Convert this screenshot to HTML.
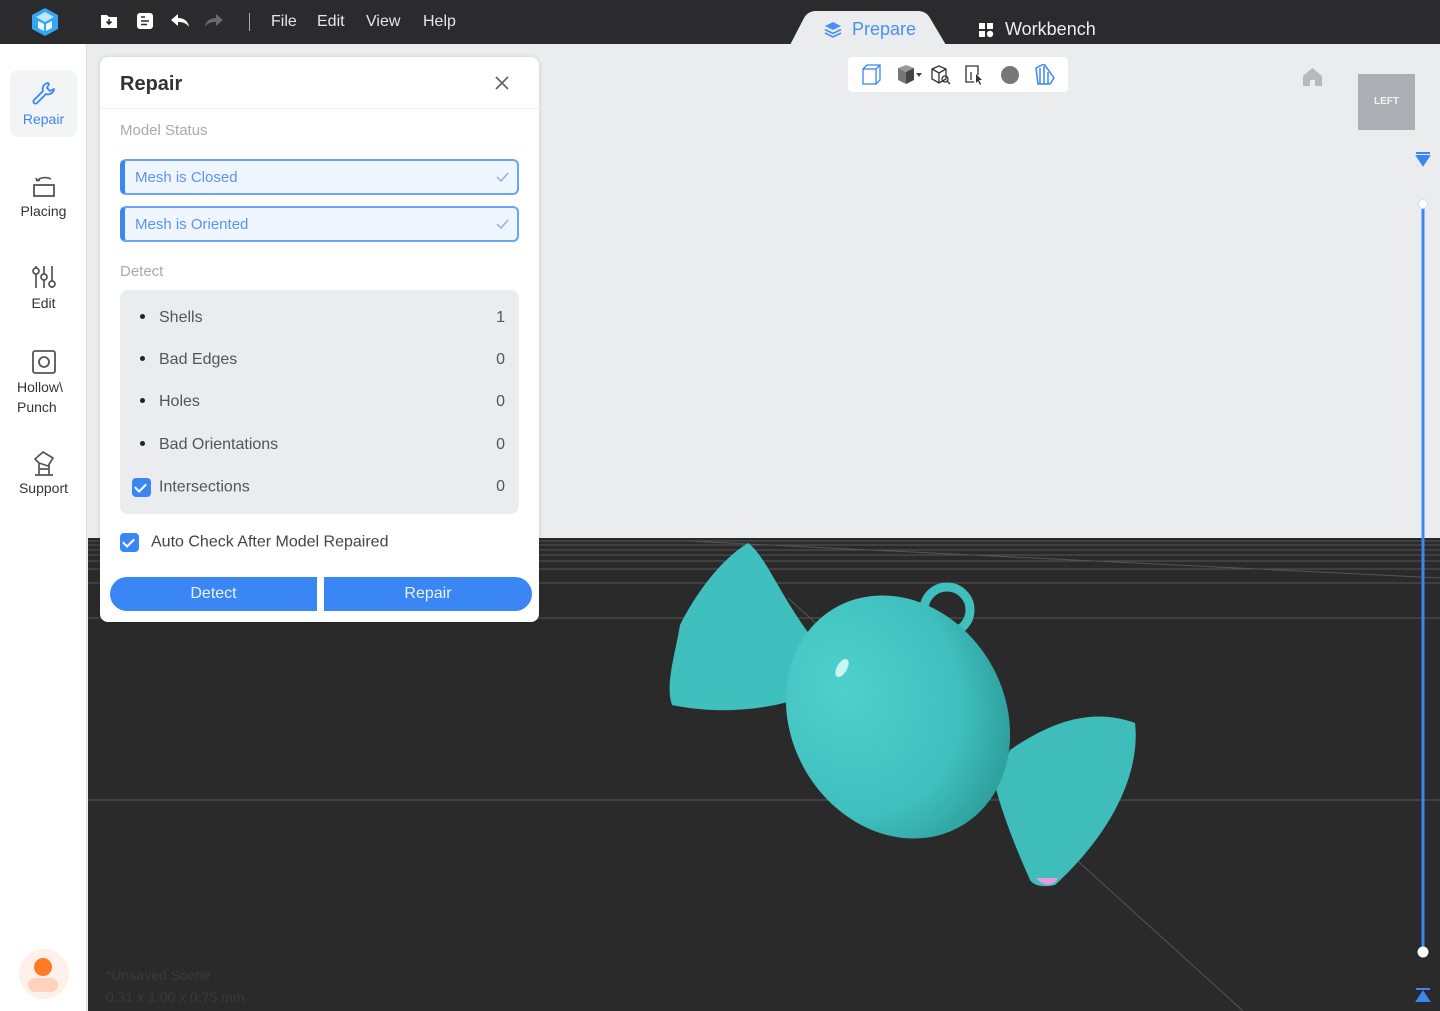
<!DOCTYPE html>
<html><head><meta charset="utf-8"><style>
*{box-sizing:border-box;margin:0;padding:0}
body{width:1440px;height:1011px;overflow:hidden;font-family:"Liberation Sans","Noto Sans CJK SC",sans-serif;background:#ebecee;position:relative}
.abs{position:absolute}
.top{left:0;top:0;width:1440px;height:44px;background:#2b2b2d}
.menu{color:#e6e6e6;font-size:16px;top:13px}
.side{left:0;top:44px;width:87px;height:967px;background:#fff;border-right:1px solid #d8d8d8}
.si{position:absolute;width:87px;text-align:center;font-size:14px;color:#333}
.panel{left:100px;top:57px;width:439px;height:565px;background:#fff;border-radius:8px;box-shadow:0 0 4px rgba(0,0,0,.15)}
.status{position:absolute;left:20px;width:399px;height:36px;background:#f0f6ff;border:2px solid #6aa4f8;border-left:5px solid #3a86f5;border-radius:6px;color:#5a93ee;font-size:15px;padding:8px 0 0 10px}
.status svg{position:absolute;right:8px;top:11px}
.row{position:absolute;left:20px;right:34px;font-size:16px;color:#555}
.row b{font-weight:normal;position:absolute;right:0}
.dot{display:inline-block;width:5px;height:5px;background:#222;border-radius:50%;margin:0 14px 3px 0;vertical-align:middle}
.cb{display:inline-block;width:19px;height:19px;background:#3a86f5;border-radius:4px;vertical-align:middle;position:relative}
.cb:after{content:"";position:absolute;left:5px;top:3px;width:5px;height:9px;border:solid #fff;border-width:0 2px 2px 0;transform:rotate(45deg)}
.btn{position:absolute;top:520px;height:34px;background:#3a86f5;color:#eaf2ff;font-size:16px;text-align:center;line-height:34px}
</style></head><body>
<div class="abs top"></div>
<svg class="abs" style="left:30px;top:7px" width="30" height="30" viewBox="0 0 30 30"><polygon points="15,1 28,8 28,22 15,29 2,22 2,8" fill="#35a6f0"/><polygon points="15,5 24,10 15,15 6,10" fill="#bfe6ff"/><path d="M8 14v7l6 3v-7zM22 14v7l-6 3v-7z" fill="#fff" opacity=".9"/></svg>
<svg class="abs" style="left:100px;top:12px" width="18" height="18" viewBox="0 0 18 18"><path d="M1 3h6l2 2h8v11H1z" fill="#fff"/><path d="M9 7v5M6.5 9.5L9 12l2.5-2.5" stroke="#2b2b2d" stroke-width="1.6" fill="none"/></svg>
<svg class="abs" style="left:136px;top:12px" width="18" height="18" viewBox="0 0 18 18"><rect x="1" y="1" width="16" height="16" rx="3" fill="#fff"/><path d="M5 9h8M5 12.5h6M5 5h4" stroke="#2b2b2d" stroke-width="1.6"/></svg>
<svg class="abs" style="left:170px;top:12px" width="20" height="18" viewBox="0 0 20 18"><path d="M8 2L1 8l7 6V10c5 0 8 1 11 5-1-6-5-9-11-9z" fill="#fff"/></svg>
<svg class="abs" style="left:204px;top:12px" width="20" height="18" viewBox="0 0 20 18"><path d="M12 2l7 6-7 6V10c-5 0-8 1-11 5 1-6 5-9 11-9z" fill="#6a6a6a"/></svg>
<div class="abs" style="left:249px;top:13px;width:1px;height:18px;background:#aaa"></div>
<div class="abs menu" style="left:271px">File</div>
<div class="abs menu" style="left:317px">Edit</div>
<div class="abs menu" style="left:366px">View</div>
<div class="abs menu" style="left:423px">Help</div>
<svg class="abs" style="left:790px;top:10px" width="158" height="35"><path d="M0 35 L14 8 Q18 1 26 1 L128 1 Q136 1 140 8 L156 35Z" fill="#ebecee"/></svg>
<svg class="abs" style="left:824px;top:21px" width="18" height="17" viewBox="0 0 18 17"><path d="M9 1l8 4-8 4-8-4z" fill="#4a8ff5"/><path d="M1 8.5l8 4 8-4M1 12l8 4 8-4" stroke="#4a8ff5" stroke-width="1.6" fill="none"/></svg>
<div class="abs" style="left:852px;top:19px;font-size:18px;color:#4a8ff5">Prepare</div>
<svg class="abs" style="left:978px;top:22px" width="16" height="16"><rect x="1" y="1" width="6" height="6" fill="#fff"/><rect x="9" y="1" width="6" height="6" fill="#fff"/><rect x="1" y="9" width="6" height="6" fill="#fff"/><circle cx="12" cy="12" r="3.2" fill="#fff"/></svg>
<div class="abs" style="left:1005px;top:19px;font-size:18px;color:#eee">Workbench</div>
<div class="abs side"></div>
<div class="abs" style="left:10px;top:70px;width:67px;height:67px;background:#f3f4f6;border-radius:8px"></div>
<svg class="abs" style="left:31px;top:80px" width="26" height="26" viewBox="0 0 26 26"><path d="M17 3a6 6 0 0 0-5 8L3 20a2 2 0 0 0 3 3l9-9a6 6 0 0 0 8-5l-4 2-3-3 2-4z" fill="none" stroke="#3a86f5" stroke-width="1.8" stroke-linejoin="round"/></svg>
<div class="si" style="top:111px;color:#3a86f5">Repair</div>
<svg class="abs" style="left:31px;top:173px" width="26" height="26" viewBox="0 0 26 26"><rect x="3" y="12" width="20" height="11" fill="none" stroke="#555" stroke-width="1.8"/><path d="M6 8a9 6 0 0 1 14-2M6 8l-1-3M6 8l3-1" fill="none" stroke="#555" stroke-width="1.6"/></svg>
<div class="si" style="top:203px">Placing</div>
<svg class="abs" style="left:31px;top:264px" width="26" height="26" viewBox="0 0 26 26"><path d="M5 2v22M13 2v22M21 2v22" stroke="#555" stroke-width="1.7"/><circle cx="5" cy="7" r="3" fill="#fff" stroke="#555" stroke-width="1.7"/><circle cx="13" cy="13" r="3" fill="#fff" stroke="#555" stroke-width="1.7"/><circle cx="21" cy="20" r="3" fill="#fff" stroke="#555" stroke-width="1.7"/></svg>
<div class="si" style="top:295px">Edit</div>
<svg class="abs" style="left:31px;top:349px" width="26" height="26" viewBox="0 0 26 26"><rect x="2" y="2" width="22" height="22" rx="2" fill="none" stroke="#555" stroke-width="1.8"/><circle cx="13" cy="13" r="5" fill="none" stroke="#555" stroke-width="1.8"/></svg>
<div class="si" style="top:377px;text-align:left;left:17px;line-height:20px">Hollow\<br>Punch</div>
<svg class="abs" style="left:31px;top:449px" width="26" height="28" viewBox="0 0 26 28"><path d="M4 10l8-7 10 6-5 8-9-3z M8 14v12M18 16v10M4 26h18M8 20l10 0" fill="none" stroke="#555" stroke-width="1.7" stroke-linejoin="round"/></svg>
<div class="si" style="top:480px">Support</div>
<div class="abs" style="left:19px;top:949px;width:50px;height:50px;border-radius:50%;background:#fff1ea"></div>
<div class="abs" style="left:34px;top:958px;width:18px;height:18px;border-radius:50%;background:#ff7b25"></div>
<div class="abs" style="left:28px;top:978px;width:30px;height:14px;border-radius:15px;background:#ffd3bb"></div>
<div class="abs" style="left:88px;top:538px;width:1352px;height:473px;background:#2a2a2a"></div>
<svg class="abs" style="left:88px;top:538px" width="1352" height="473">
<g stroke="#555" stroke-width="1">
<line x1="0" y1="3" x2="1352" y2="3"/><line x1="0" y1="7" x2="1352" y2="7"/><line x1="0" y1="12" x2="1352" y2="12"/><line x1="0" y1="17" x2="1352" y2="17"/><line x1="0" y1="23" x2="1352" y2="23"/><line x1="0" y1="31" x2="1352" y2="31"/><line x1="0" y1="45" x2="1352" y2="45"/><line x1="0" y1="80" x2="1352" y2="80"/><line x1="0" y1="262" x2="1352" y2="262"/>
<line x1="600" y1="3" x2="1352" y2="40"/>
<line x1="700" y1="60" x2="1155" y2="473"/>
</g></svg>
<svg class="abs" style="left:660px;top:535px" width="490" height="360" viewBox="0 0 490 360">
<defs><radialGradient id="g" cx="0.35" cy="0.3" r="0.8"><stop offset="0" stop-color="#4fd0cd"/><stop offset="0.65" stop-color="#3fbfbd"/><stop offset="1" stop-color="#2a9896"/></radialGradient></defs>
<path d="M88 8 C105 20 120 60 150 100 L170 120 L150 160 C110 175 60 180 12 170 C5 150 15 120 20 90 C35 60 60 25 88 8Z" fill="#3fc0be"/>
<path d="M350 215 C400 180 440 175 475 188 C480 230 460 290 395 350 C385 352 375 352 370 345 C350 300 340 270 335 250Z" fill="#3fbdbb"/>
<path d="M376 343 C384 352 393 352 398 343Z" fill="#e59be0"/>
<circle cx="287" cy="75" r="23" fill="none" stroke="#3fc0be" stroke-width="9"/>
<ellipse cx="238" cy="182" rx="107" ry="126" transform="rotate(-30 238 182)" fill="url(#g)"/>
<ellipse cx="182" cy="133" rx="5" ry="10" transform="rotate(30 182 133)" fill="#e8ffff" opacity=".8"/>
</svg>
<div class="abs" style="left:848px;top:57px;width:220px;height:35px;background:#fff;border-radius:4px"></div>
<svg class="abs" style="left:860px;top:64px" width="200" height="22">
<g fill="none" stroke="#3a86f5" stroke-width="1.3"><rect x="3" y="5" width="13" height="15"/><path d="M3 5l4-4h13v15l-4 4M16 5l4-4"/></g>
<polygon points="38,4 46,1 54,4 46,8" fill="#999"/><polygon points="38,4 46,8 46,20 38,16" fill="#777"/><polygon points="46,8 54,4 54,16 46,20" fill="#444"/><polygon points="56,9 62,9 59,13" fill="#444"/>
<g fill="none" stroke="#333" stroke-width="1.3"><path d="M72 5l7-3 7 3v10l-7 4-7-4zM72 5l7 4 7-4M79 9v10"/><circle cx="85" cy="15" r="3"/><path d="M87 17l3 3"/><path d="M114 18h-8V2h12v9M111 8v8"/></g>
<path d="M116 10l6 6-3 0 2 4-1 1-2-4-2 2z" fill="#333"/>
<circle cx="150" cy="11" r="9" fill="#777"/>
<g fill="none" stroke="#3a86f5" stroke-width="1.5"><path d="M178 20l-2-16 8-4 10 14-4 6z"/><path d="M180 4v16M184 2v18M188 8v12"/></g>
</svg>
<svg class="abs" style="left:1302px;top:67px" width="21" height="20"><path d="M10.5 1L1 9v10h7v-6h5v6h7V9z" fill="#b8b9bd"/></svg>
<div class="abs" style="left:1358px;top:74px;width:57px;height:56px;background:#aeafb4;color:#f2f2f2;font-size:10px;font-weight:bold;text-align:center;line-height:56px">LEFT</div>
<svg class="abs" style="left:1413px;top:150px" width="22" height="860">
<path d="M3 3h14M4 6l6 9 6-9z" fill="#3a86f5" stroke="#3a86f5" stroke-width="2"/>
<line x1="10" y1="54" x2="10" y2="802" stroke="#3a86f5" stroke-width="3"/>
<circle cx="10" cy="54" r="4.5" fill="#fff" stroke="#ddd"/>
<circle cx="10" cy="802" r="5.5" fill="#fff"/>
<path d="M3 839h14M4 851l6-9 6 9z" fill="#3a86f5" stroke="#3a86f5" stroke-width="2"/>
</svg>
<div class="abs" style="left:106px;top:964px;font-size:14px;color:#3a3a3a;line-height:22px">*Unsaved Scene<br>0.31 x 1.00 x 0.75 mm</div>
<div class="abs panel">
<div style="position:absolute;left:20px;top:16px;font-size:20px;font-weight:bold;color:#333">Repair</div>
<svg style="position:absolute;left:395px;top:19px" width="14" height="14"><path d="M1 1l12 12M13 1L1 13" stroke="#666" stroke-width="1.8"/></svg>
<div style="position:absolute;left:0;top:51px;width:439px;height:1px;background:#f0f0f0"></div>
<div style="position:absolute;left:20px;top:65px;font-size:15px;color:#aaa">Model Status</div>
<div class="status" style="top:102px">Mesh is Closed<svg width="13" height="10"><path d="M1 5l4 4 7-8" fill="none" stroke="#8ab4f0" stroke-width="1.5"/></svg></div>
<div class="status" style="top:149px">Mesh is Oriented<svg width="13" height="10"><path d="M1 5l4 4 7-8" fill="none" stroke="#8ab4f0" stroke-width="1.5"/></svg></div>
<div style="position:absolute;left:20px;top:206px;font-size:15px;color:#aaa">Detect</div>
<div style="position:absolute;left:20px;top:233px;width:399px;height:224px;background:#ebecef;border-radius:8px">
<div class="row" style="top:19px;left:20px;right:14px"><span class="dot"></span>Shells<b>1</b></div>
<div class="row" style="top:61px;left:20px;right:14px"><span class="dot"></span>Bad Edges<b>0</b></div>
<div class="row" style="top:103px;left:20px;right:14px"><span class="dot"></span>Holes<b>0</b></div>
<div class="row" style="top:146px;left:20px;right:14px"><span class="dot"></span>Bad Orientations<b>0</b></div>
<div class="row" style="top:188px;left:12px;right:14px"><span class="cb" style="margin-right:8px"></span>Intersections<b>0</b></div>
</div>
<div style="position:absolute;left:20px;top:476px;font-size:16px;color:#444"><span class="cb" style="margin-right:12px"></span>Auto Check After Model Repaired</div>
<div class="btn" style="left:10px;width:207px;border-radius:17px 0 0 17px">Detect</div>
<div class="btn" style="left:224px;width:208px;border-radius:0 17px 17px 0">Repair</div>
</div>
</body></html>
